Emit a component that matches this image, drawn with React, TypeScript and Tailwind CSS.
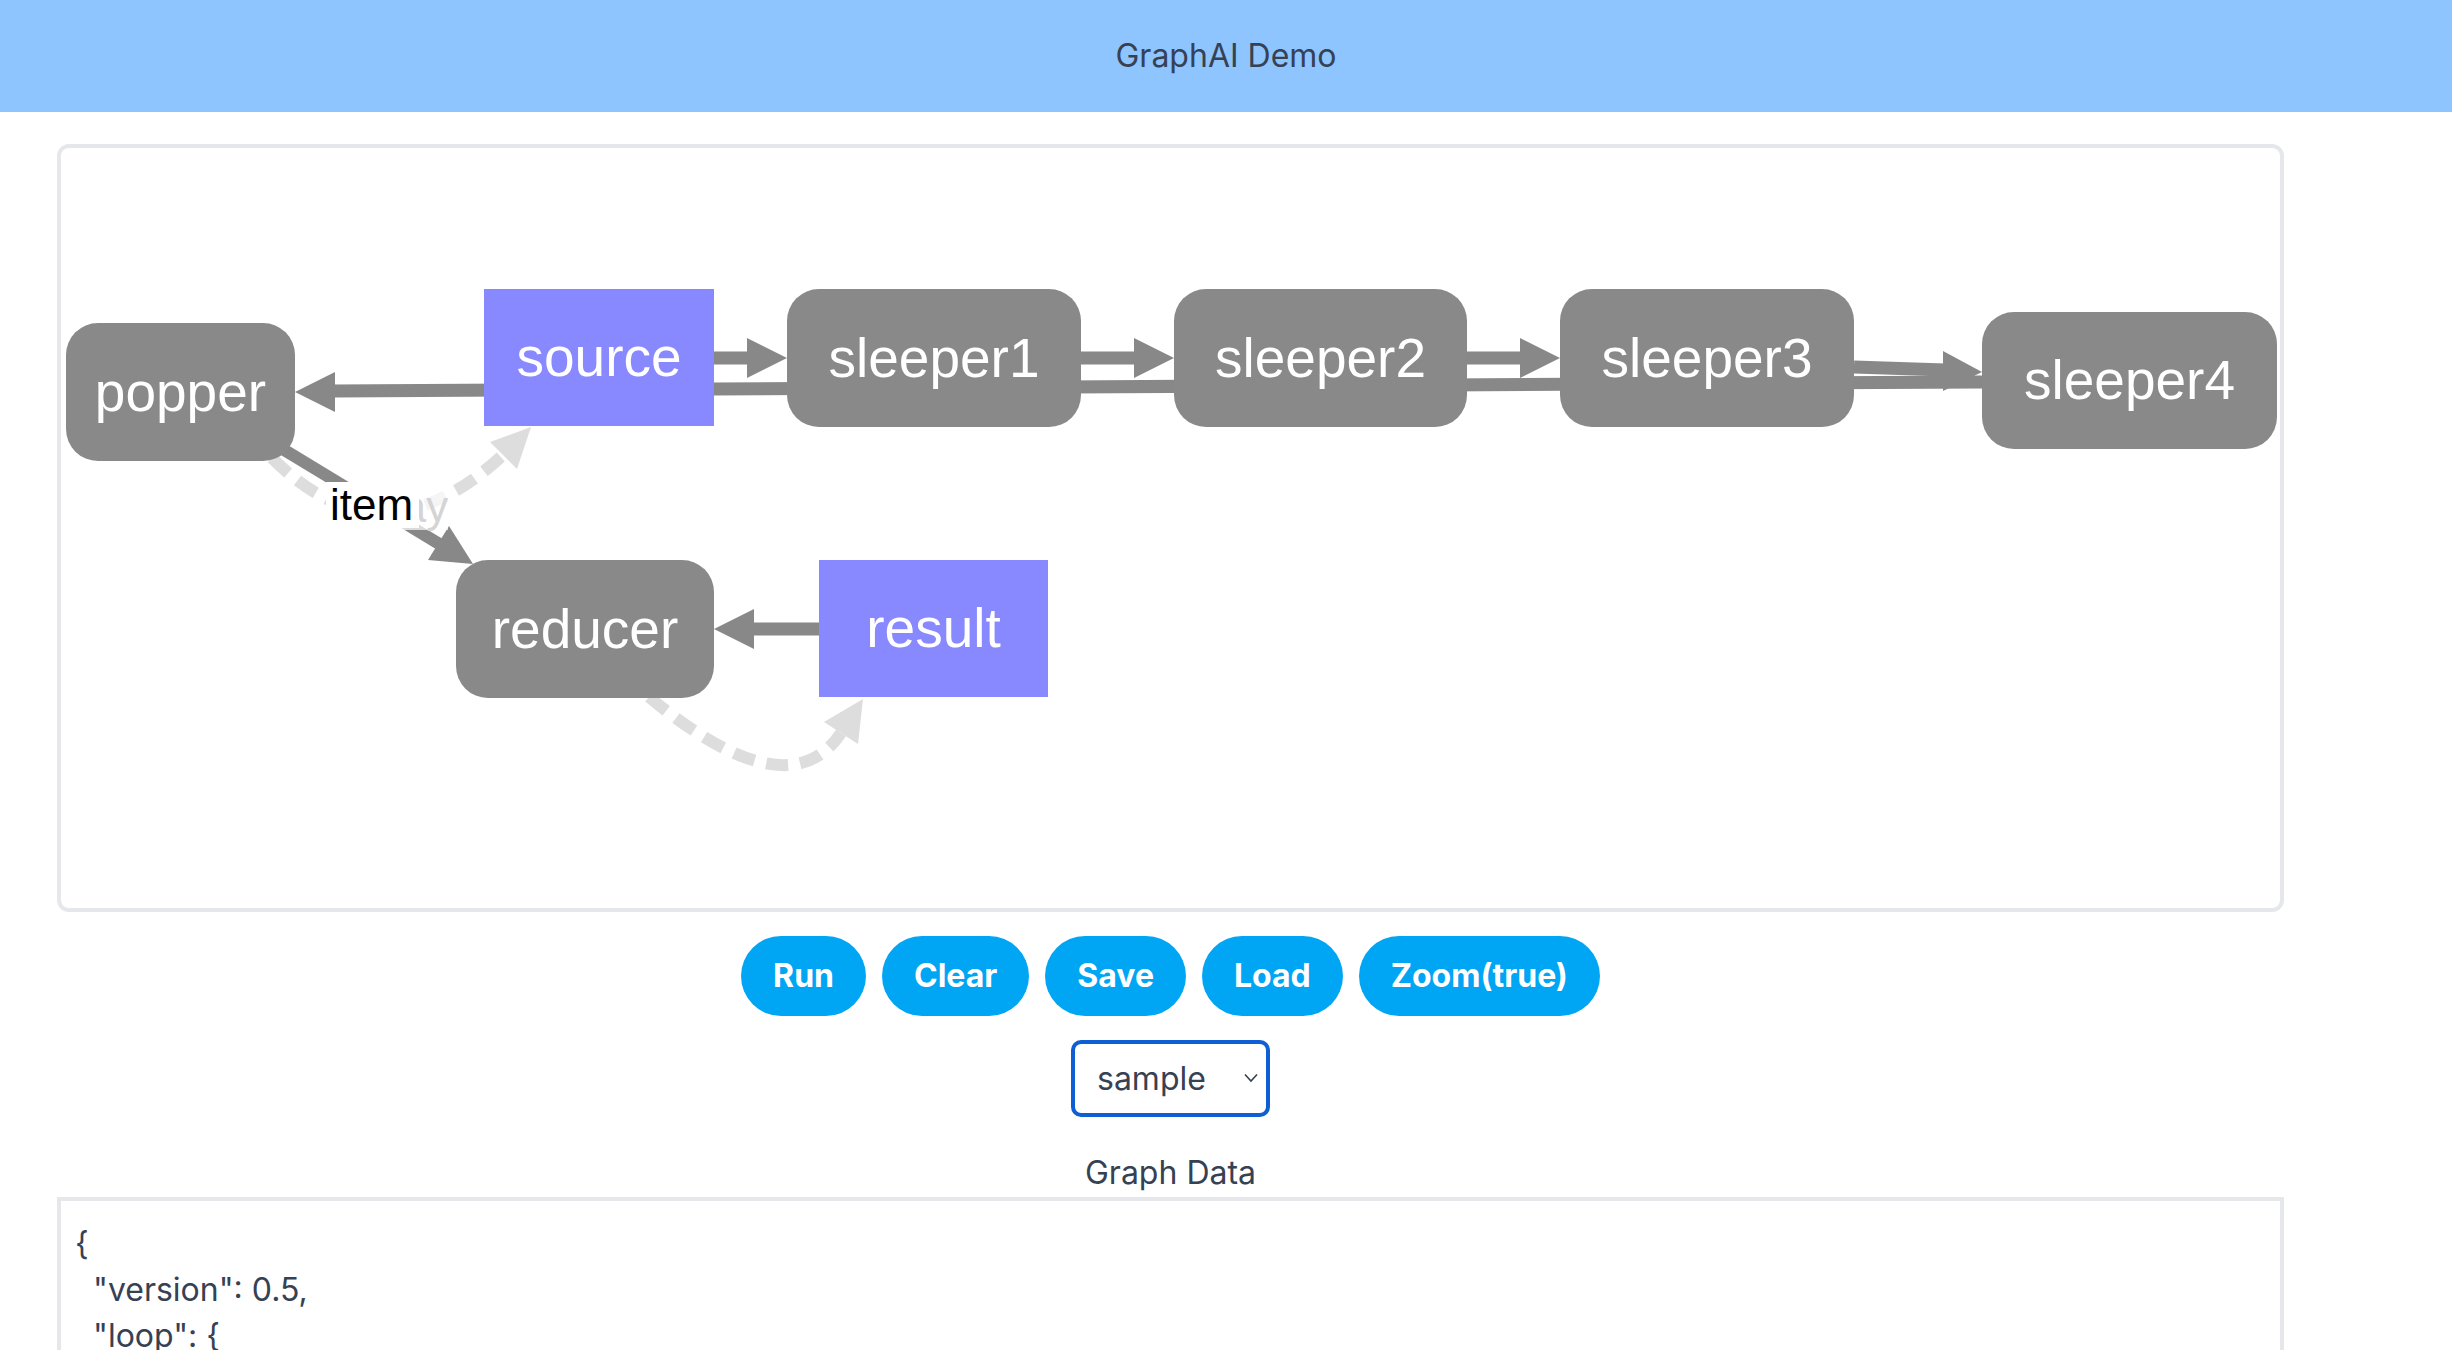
import React from 'react';

type NodeBox = {
  id: string;
  x: number;
  y: number;
  w: number;
  h: number;
  kind: 'computed' | 'static';
};

// positions are relative to the inner box of the graph panel
const nodes: NodeBox[] = [
  { id: 'popper', x: 5, y: 175, w: 229, h: 138, kind: 'computed' },
  { id: 'source', x: 423, y: 141, w: 230, h: 137, kind: 'static' },
  { id: 'sleeper1', x: 726, y: 141, w: 294, h: 138, kind: 'computed' },
  { id: 'sleeper2', x: 1113, y: 141, w: 293, h: 138, kind: 'computed' },
  { id: 'sleeper3', x: 1499, y: 141, w: 294, h: 138, kind: 'computed' },
  { id: 'sleeper4', x: 1921, y: 164, w: 295, h: 137, kind: 'computed' },
  { id: 'reducer', x: 395, y: 412, w: 258, h: 138, kind: 'computed' },
  { id: 'result', x: 758, y: 412, w: 229, h: 137, kind: 'static' },
];

const graphJson = `{
  "version": 0.5,
  "loop": {
    "while": ":source"
  },
  "nodes": {
    "source": {
      "value": [
        "orange",
        "banana",
        "lemon"
      ],
      "update": ":popper.array"
    },
    "result": {
      "value": [],
      "update": ":reducer.array"
    },
    "sleeper1": {
      "agent": "sleeperAgent",
      "params": {
        "duration": 200
      },
      "inputs": {
        "array": ":source"
      }
    }
  }
}`;

const EDGE = '#888888';
const DASH = '#dddddd';

const Arrow = ({ tip, base1, base2, color }: { tip: [number, number]; base1: [number, number]; base2: [number, number]; color: string }) => (
  <polygon points={`${tip[0]},${tip[1]} ${base1[0]},${base1[1]} ${base2[0]},${base2[1]}`} fill={color} />
);

const GraphCanvas = () => {
  return (
    <div className="relative w-full h-full overflow-hidden">
      <svg className="absolute inset-0 w-full h-full" width="2219" height="760">
        {/* sleeper4 -> popper, runs behind the row */}
        <line x1={1921} y1={234} x2={272} y2={243} stroke={EDGE} strokeWidth={13} />
        <Arrow tip={[234, 244]} base1={[274, 224]} base2={[274, 264]} color={EDGE} />

        {/* chain */}
        <line x1={653} y1={210} x2={688} y2={210} stroke={EDGE} strokeWidth={13} />
        <Arrow tip={[726, 210]} base1={[686, 190]} base2={[686, 230]} color={EDGE} />
        <line x1={1020} y1={210} x2={1075} y2={210} stroke={EDGE} strokeWidth={13} />
        <Arrow tip={[1113, 210]} base1={[1073, 190]} base2={[1073, 230]} color={EDGE} />
        <line x1={1406} y1={210} x2={1461} y2={210} stroke={EDGE} strokeWidth={13} />
        <Arrow tip={[1499, 210]} base1={[1459, 190]} base2={[1459, 230]} color={EDGE} />
        <line x1={1793} y1={219} x2={1884} y2={222} stroke={EDGE} strokeWidth={13} />
        <Arrow tip={[1921, 224]} base1={[1882, 203]} base2={[1882, 243]} color={EDGE} />

        {/* popper.array -> source (update) */}
        <path d="M 211 310 Q 320 420 442 307" fill="none" stroke={DASH} strokeWidth={12} strokeDasharray="22 12" />
        <Arrow tip={[470, 279]} base1={[429, 294]} base2={[456, 321]} color={DASH} />

        {/* reducer.array -> result (update) */}
        <path d="M 588 549 Q 727 664 780 585" fill="none" stroke={DASH} strokeWidth={12} strokeDasharray="22 12" />
        <Arrow tip={[802, 551]} base1={[763, 574]} base2={[797, 596]} color={DASH} />

        {/* popper.item -> reducer */}
        <line x1={220} y1={300} x2={380} y2={397} stroke={EDGE} strokeWidth={12} />
        <Arrow tip={[412, 416]} base1={[367, 412]} base2={[388, 378]} color={EDGE} />

        {/* result -> reducer */}
        <line x1={758} y1={481} x2={691} y2={481} stroke={EDGE} strokeWidth={13} />
        <Arrow tip={[653, 481]} base1={[693, 461]} base2={[693, 501]} color={EDGE} />
      </svg>

      {/* edge labels */}
      <div className="absolute left-[287px] top-[336px] px-0 bg-white/70 text-[44px] leading-[46px] text-[#d4d4d4] font-['Liberation_Sans',Arial,sans-serif]">
        array
      </div>
      <div className="absolute left-[265px] top-[334px] w-[93px] bg-white text-[44px] leading-[46px] text-black font-['Liberation_Sans',Arial,sans-serif] pl-[4px]">
        item
      </div>

      {nodes.map((n) => (
        <div
          key={n.id}
          className={`absolute flex items-center justify-center text-white text-[55px] font-['Liberation_Sans',Arial,sans-serif] ${
            n.kind === 'static' ? 'bg-[#8888ff]' : 'bg-[#898989] rounded-[32px]'
          }`}
          style={{ left: n.x, top: n.y, width: n.w, height: n.h }}
        >
          {n.id}
        </div>
      ))}
    </div>
  );
};

export default function App() {
  const buttons = ['Run', 'Clear', 'Save', 'Load', 'Zoom(true)'];

  return (
    <div className="min-h-screen bg-white font-['Inter',sans-serif] text-gray-700">
      <header className="h-[112px] bg-blue-300 flex items-center justify-center text-[32px]">
        GraphAI Demo
      </header>

      <main className="ml-[57px] w-[2227px] flex flex-col items-center">
        {/* Graph Panel */}
        <div className="mt-8 w-full h-[768px] border-4 border-gray-200 rounded-xl">
          <GraphCanvas />
        </div>

        {/* Controls */}
        <div className="mt-6 flex gap-4">
          {buttons.map((b) => (
            <button
              key={b}
              className="h-[80px] px-8 rounded-full bg-sky-500 text-white font-bold text-[32px] leading-[48px]"
            >
              {b}
            </button>
          ))}
        </div>

        <div className="relative mt-6">
          <select
            defaultValue="sample"
            className="appearance-none w-[199px] h-[77px] border-4 border-[#0d5fd3] rounded-[10px] pl-[22px] pr-[48px] text-[32px] text-gray-700 bg-white outline-none"
          >
            <option value="sample">sample</option>
            <option value="loop">loop</option>
          </select>
          <svg
            className="absolute right-[12px] top-[33px] pointer-events-none"
            width="14"
            height="10"
            viewBox="0 0 14 10"
          >
            <path d="M1 1.5 L7 8 L13 1.5" fill="none" stroke="#374151" strokeWidth="1.6" />
          </svg>
        </div>

        <div className="mt-8 text-[32px] leading-[48px]">Graph Data</div>
        <textarea
          readOnly
          value={graphJson}
          className="w-full h-[1200px] border-4 border-gray-200 pl-[14px] pt-[20px] text-[32px] leading-[46px] text-gray-700 resize-none outline-none font-['Inter',sans-serif]"
        />
      </main>
    </div>
  );
}
